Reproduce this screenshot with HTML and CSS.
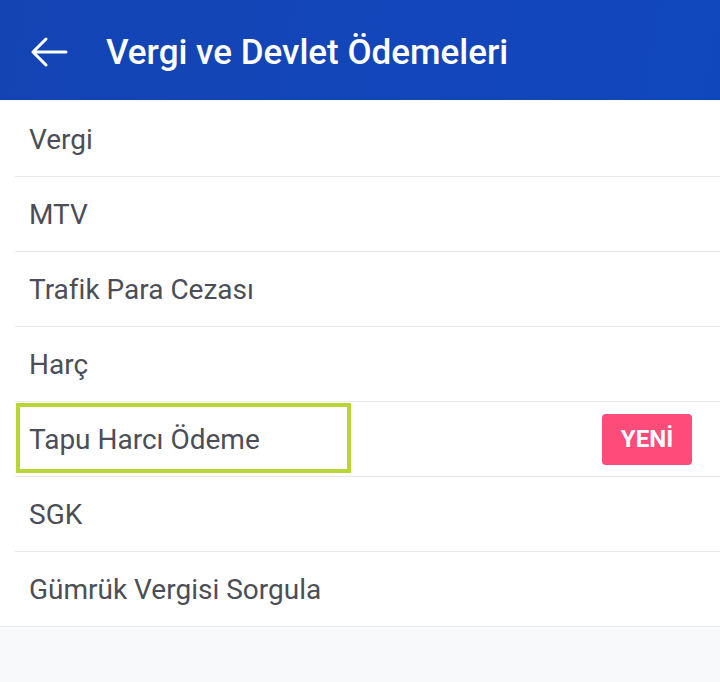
FILE: index.html
```html
<!DOCTYPE html>
<html lang="tr">
<head>
    <meta charset="UTF-8">
    <meta name="viewport" content="width=device-width, initial-scale=1.0">
    <title>Vergi ve Devlet Ödemeleri</title>
    <link rel="stylesheet" href="styles.css">
</head>
<body>
    <div class="header">
        <button class="back-btn" aria-label="Geri">
            <svg width="38" height="32" viewBox="0 0 38 32">
                <path d="M36 16 H3 M16 3 L3 16 L16 29" fill="none" stroke="#fff" stroke-width="3" stroke-linecap="round" stroke-linejoin="round"/>
            </svg>
        </button>
        <h1>Vergi ve Devlet Ödemeleri</h1>
    </div>

    <ul class="menu">
        <li class="menu-item">Vergi</li>
        <li class="menu-item">MTV</li>
        <li class="menu-item">Trafik Para Cezası</li>
        <li class="menu-item">Harç</li>
        <li class="menu-item highlighted">
            <span class="highlight-box"></span>
            <span>Tapu Harcı Ödeme</span>
            <span class="badge">YENİ</span>
        </li>
        <li class="menu-item">SGK</li>
        <li class="menu-item last">Gümrük Vergisi Sorgula</li>
    </ul>
</body>
</html>
```

FILE: styles.css
```css
body {
    margin: 0;
    font-family: Roboto, 'Noto Sans', sans-serif;
    background: #f8f9fb;
    min-height: 100vh;
}

.header {
    height: 100px;
    display: flex;
    align-items: center;
    background: linear-gradient(100deg, #1444b4 0%, #1147bd 100%);
    color: white;
}

.back-btn {
    background: none;
    border: none;
    padding: 0;
    margin-left: 30px;
    width: 38px;
    height: 32px;
    margin-top: 4px;
    cursor: pointer;
}

.header h1 {
    margin: 4px 0 0 38px;
    font-size: 35px;
    font-weight: 500;
    letter-spacing: 0;
}

.menu {
    list-style: none;
    margin: 0;
    padding: 2px 0 0 0;
    background: white;
}

.menu-item {
    position: relative;
    height: 74px;
    margin-left: 15px;
    padding-left: 14px;
    display: flex;
    align-items: center;
    border-bottom: 1px solid #e8e9ec;
    font-size: 28px;
    color: #4b4e57;
}

.menu-item.last {
    margin-left: 0;
    padding-left: 29px;
}

.highlight-box {
    position: absolute;
    left: 1px;
    top: 1px;
    width: 327px;
    height: 62px;
    border: 4px solid #b7d534;
}

.badge {
    margin-left: auto;
    margin-right: 28px;
    background: #fd4c7a;
    color: white;
    font-weight: 700;
    font-size: 24px;
    border-radius: 4px;
    width: 90px;
    height: 51px;
    display: flex;
    align-items: center;
    justify-content: center;
}
```
